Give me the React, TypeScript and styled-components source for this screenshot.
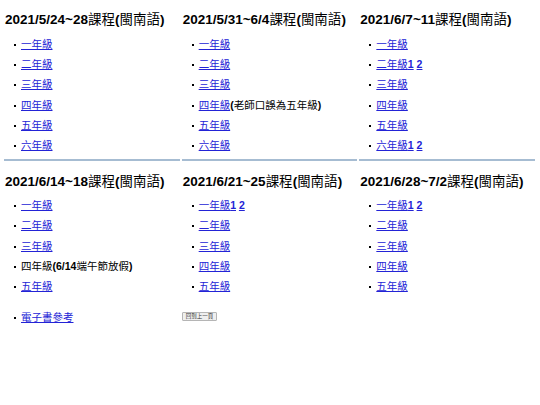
import React from 'react';
import styled, { createGlobalStyle } from 'styled-components';

type Item = { label: string; extra?: string[]; link?: boolean; note?: string };
type Week = { title: string; items: Item[] };

const grades = ['一年級', '二年級', '三年級', '四年級', '五年級', '六年級'];

const plain = (n: number): Item[] => grades.slice(0, n).map((g) => ({ label: g, link: true }));

const row1: Week[] = [
  { title: '2021/5/24~28課程(閩南語)', items: plain(6) },
  {
    title: '2021/5/31~6/4課程(閩南語)',
    items: plain(6).map((it, i) => (i === 3 ? { ...it, note: '(老師口誤為五年級)' } : it)),
  },
  {
    title: '2021/6/7~11課程(閩南語)',
    items: plain(6).map((it, i) => (i === 1 || i === 5 ? { ...it, extra: ['1', '2'] } : it)),
  },
];

const row2: Week[] = [
  {
    title: '2021/6/14~18課程(閩南語)',
    items: plain(5).map((it, i) => (i === 3 ? { label: '四年級(6/14端午節放假)', link: false } : it)),
  },
  {
    title: '2021/6/21~25課程(閩南語)',
    items: plain(5).map((it, i) => (i === 0 ? { ...it, extra: ['1', '2'] } : it)),
  },
  {
    title: '2021/6/28~7/2課程(閩南語)',
    items: plain(5).map((it, i) => (i === 0 ? { ...it, extra: ['1', '2'] } : it)),
  },
];

const GlobalStyle = createGlobalStyle`
  body {
    margin: 0;
    background: #fff;
    font-family: "Liberation Sans", Arial, "Noto Sans CJK TC", sans-serif;
    color: #000;
  }
`;

const Grid = styled.div`
  display: grid;
  grid-template-columns: repeat(3, 1fr);
  column-gap: 2px;
  width: 531px;
  padding-left: 4px;
`;

const Cell = styled.div<{ $top?: boolean }>`
  padding: ${(p) => (p.$top ? '12px 0 4px 1px' : '13px 0 0 1px')};
  border-bottom: ${(p) => (p.$top ? '2px solid #a6bcd2' : 'none')};
`;

const Title = styled.h2`
  margin: 0;
  font-size: 13.5px;
  line-height: 16px;
  font-weight: bold;
  white-space: nowrap;
`;

// the CJK face has no bold cut in the original, so Han text stays regular
const Han = styled.span`
  font-weight: normal;
`;

const List = styled.ul<{ $gap?: number }>`
  list-style: none;
  margin: ${(p) => p.$gap ?? 6}px 0 0;
  padding: 0;
`;

const Li = styled.li`
  position: relative;
  padding-left: 16px;
  line-height: 20.2px;
  font-size: 10.5px;
  font-weight: bold;
  white-space: nowrap;

  &::before {
    content: '';
    position: absolute;
    left: 9px;
    top: 10px;
    width: 2px;
    height: 2px;
    background: #000;
  }
`;

const A = styled.a`
  color: #2323d6;
  text-decoration: underline;
  cursor: pointer;
`;

const Back = styled.button`
  display: block;
  margin: 16px 0 0 -1px;
  padding: 0 3px;
  height: 9px;
  font-size: 5.5px;
  line-height: 7px;
  font-family: "Noto Sans CJK TC", sans-serif;
  color: #333;
  background: #efefef;
  border: 1px solid #b5b5b5;
  border-radius: 1px;
`;

function Text({ s }: { s: string }) {
  const parts = s.split(/([\u3000-\u9fff]+)/).filter(Boolean);
  return (
    <>
      {parts.map((p, i) => (/[\u3000-\u9fff]/.test(p) ? <Han key={i}>{p}</Han> : <React.Fragment key={i}>{p}</React.Fragment>))}
    </>
  );
}

function WeekList({ items, gap }: { items: Item[]; gap?: number }) {
  return (
    <List $gap={gap}>
      {items.map((it, i) => (
        <Li key={i}>
          {it.link ? (
            <A href="#">
              <Text s={it.label} />
            </A>
          ) : (
            <Text s={it.label} />
          )}
          {it.extra && (
            <>
              <A href="#">{it.extra[0]}</A> <A href="#">{it.extra[1]}</A>
            </>
          )}
          {it.note && <Text s={it.note} />}
        </Li>
      ))}
    </List>
  );
}

export default function App() {
  return (
    <>
      <GlobalStyle />
      <Grid>
        {row1.map((w) => (
          <Cell $top key={w.title}>
            <Title>
              <Text s={w.title} />
            </Title>
            <WeekList items={w.items} />
          </Cell>
        ))}
        {row2.map((w, i) => (
          <Cell key={w.title}>
            <Title>
              <Text s={w.title} />
            </Title>
            <WeekList items={w.items} gap={5} />
            {i === 0 && <WeekList items={[{ label: '電子書參考', link: true }]} gap={11} />}
            {i === 1 && <Back>回到上一頁</Back>}
          </Cell>
        ))}
      </Grid>
    </>
  );
}
